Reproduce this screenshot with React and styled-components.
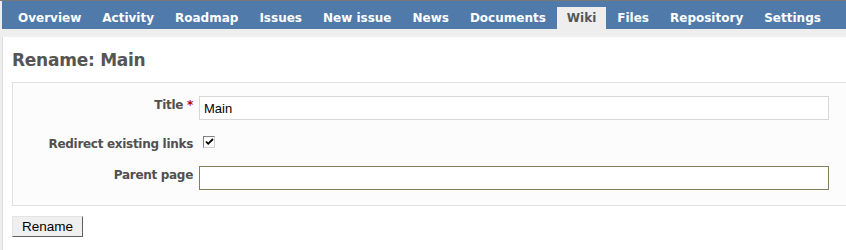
import React from "react";
import styled, { createGlobalStyle } from "styled-components";

const GlobalStyle = createGlobalStyle`
  body {
    margin: 0;
    background: #eeeeee;
    font-family: "DejaVu Sans", Verdana, sans-serif;
    font-size: 12px;
    color: #484848;
    overflow: hidden;
  }
`;

const tabs = [
  "Overview",
  "Activity",
  "Roadmap",
  "Issues",
  "New issue",
  "News",
  "Documents",
  "Wiki",
  "Files",
  "Repository",
  "Settings",
];

const App = () => {
  return (
    <Page>
      <GlobalStyle />
      <TopLine />
      <MainMenu>
        {tabs.map((t) => (
          <Tab key={t} selected={t === "Wiki"}>
            {t}
          </Tab>
        ))}
      </MainMenu>
      <Content>
        <Heading>Rename: Main</Heading>
        <Box>
          <Row>
            <Label>
              Title <Required>*</Required>
            </Label>
            <TextInput defaultValue="Main" />
          </Row>
          <Row gap={15}>
            <Label>Redirect existing links</Label>
            <Check>
              <svg width="9" height="8" viewBox="0 0 9 8">
                <path
                  d="M1 3.5 L3.2 5.8 L8 1"
                  fill="none"
                  stroke="#000"
                  strokeWidth="1.8"
                />
              </svg>
            </Check>
          </Row>
          <Row gap={15}>
            <Label>Parent page</Label>
            <TextInput focused />
          </Row>
        </Box>
        <Button>Rename</Button>
      </Content>
    </Page>
  );
};

const Page = styled.div`
  min-height: 250px;
`;

const TopLine = styled.div`
  height: 1px;
  background: #787878;
`;

const MainMenu = styled.ul`
  display: flex;
  align-items: flex-end;
  height: 28px;
  margin: 0 0 8px 2px;
  padding: 0 0 0 6px;
  list-style: none;
  background: #507aaa;
`;

const Tab = styled.li`
  height: 22px;
  line-height: 22px;
  padding: 0 10px;
  margin-right: 1px;
  font-weight: bold;
  font-size: 12px;
  white-space: nowrap;
  color: ${(p) => (p.selected ? "#555" : "#fff")};
  background: ${(p) => (p.selected ? "#eeeeee" : "transparent")};
`;

const Content = styled.div`
  margin-left: 2px;
  min-height: 213px;
  padding: 13px 0 0 9px;
  box-sizing: border-box;
  background: #fff;
  border-left: 1px solid #dddddd;
`;

const Heading = styled.h2`
  margin: 0 0 12px 0;
  font-size: 17px;
  line-height: 20px;
  letter-spacing: -0.25px;
  color: #555;
`;

const Box = styled.div`
  width: 860px;
  padding: 13px 0 15px 0;
  background: #fcfcfc;
  border: 1px solid #e0e0e0;
`;

const Row = styled.div`
  display: flex;
  align-items: flex-start;
  margin-top: ${(p) => p.gap || 0}px;
`;

const Label = styled.label`
  width: 180px;
  flex-shrink: 0;
  margin-right: 6px;
  padding-top: 2px;
  line-height: 14px;
  text-align: right;
  font-weight: bold;
  letter-spacing: -0.3px;
  color: #505050;
`;

const Required = styled.span`
  color: #bb0000;
`;

const TextInput = styled.input`
  width: 630px;
  height: 24px;
  box-sizing: border-box;
  margin: 0;
  padding: 0 4px;
  font-family: "Liberation Sans", Arial, sans-serif;
  font-size: 13px;
  color: #000;
  background: #fff;
  border: 1px solid ${(p) => (p.focused ? "#80805e" : "#d7d7d7")};
  outline: none;
`;

const Check = styled.span`
  display: flex;
  align-items: center;
  justify-content: center;
  width: 10px;
  height: 10px;
  margin: 1px 0 0 4px;
  background: #fff;
  border: 1px solid;
  border-color: #808080 #d4d0c8 #d4d0c8 #808080;
`;

const Button = styled.button`
  display: block;
  width: 71px;
  height: 21px;
  margin-top: 10px;
  padding: 0;
  font-family: "Liberation Sans", Arial, sans-serif;
  font-size: 13.5px;
  color: #000;
  background: #efefef;
  border: 1px solid;
  border-color: #e4e4e4 #606060 #606060 #e4e4e4;
`;

export default App;
